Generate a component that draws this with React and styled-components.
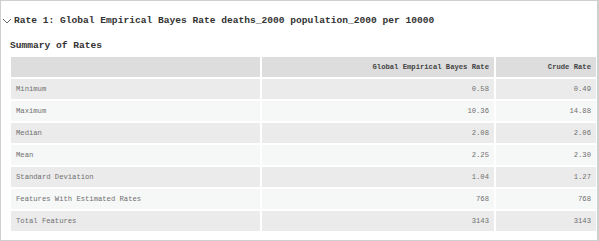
import React from "react";
import styled, { createGlobalStyle } from "styled-components";

const Global = createGlobalStyle`
  html, body { margin: 0; padding: 0; background: #fff; }
`;

const Panel = styled.div`
  box-sizing: border-box;
  width: 599px;
  height: 241px;
  border: 1px solid #cfcfcf;
  border-right-width: 2px;
  background: #fff;
  padding: 13px 0 0 1px;
  font-family: "Liberation Mono", "DejaVu Sans Mono", monospace;
`;

const TitleRow = styled.div`
  display: flex;
  align-items: center;
  gap: 2px;
  height: 12px;
  font-size: 9.6px;
  font-weight: bold;
  color: #333;
  white-space: nowrap;
`;

const Chevron = styled.svg`
  flex: none;
  width: 10px;
  height: 6px;
  margin-top: 1px;
`;

const Heading = styled.div`
  margin: 14px 0 0 8px;
  height: 12px;
  line-height: 12px;
  font-size: 9.6px;
  font-weight: bold;
  color: #333;
  white-space: nowrap;
`;

const Table = styled.table`
  margin: 3px 0 0 7px;
  width: 589px;
  table-layout: fixed;
  border-collapse: separate;
  border-spacing: 2px;
  font-size: 7.2px;
`;

const Cell = styled.td`
  height: 20px;
  padding: 0 ${(p) => (p.$right ? "5px" : "0")} 0 ${(p) => (p.$right ? "0" : "5px")};
  text-align: ${(p) => (p.$right ? "right" : "left")};
  color: #707070;
  background: ${(p) => (p.$even ? "#f6f7f7" : "#ebebeb")};
  white-space: nowrap;
  vertical-align: middle;
`;

const Head = styled.th`
  height: 20px;
  padding: 0 5px;
  text-align: right;
  font-weight: bold;
  color: #444;
  background: #dddddd;
  white-space: nowrap;
`;

const rows = [
  ["Minimum", "0.58", "0.49"],
  ["Maximum", "10.36", "14.88"],
  ["Median", "2.08", "2.06"],
  ["Mean", "2.25", "2.30"],
  ["Standard Deviation", "1.04", "1.27"],
  ["Features With Estimated Rates", "768", "768"],
  ["Total Features", "3143", "3143"],
];

export default function App() {
  return (
    <>
      <Global />
      <Panel>
        <TitleRow>
          <Chevron viewBox="0 0 10 6">
            <polyline points="1,1 5,5 9,1" fill="none" stroke="#666" strokeWidth="1" />
          </Chevron>
          <span>Rate 1: Global Empirical Bayes Rate deaths_2000 population_2000 per 10000</span>
        </TitleRow>
        <Heading>Summary of Rates</Heading>
        <Table>
          <colgroup>
            <col style={{ width: "249px" }} />
            <col style={{ width: "232px" }} />
            <col style={{ width: "100px" }} />
          </colgroup>
          <thead>
            <tr>
              <Head />
              <Head>Global Empirical Bayes Rate</Head>
              <Head>Crude Rate</Head>
            </tr>
          </thead>
          <tbody>
            {rows.map((r, i) => (
              <tr key={r[0]}>
                <Cell $even={i % 2 === 1}>{r[0]}</Cell>
                <Cell $even={i % 2 === 1} $right>{r[1]}</Cell>
                <Cell $even={i % 2 === 1} $right>{r[2]}</Cell>
              </tr>
            ))}
          </tbody>
        </Table>
      </Panel>
    </>
  );
}
